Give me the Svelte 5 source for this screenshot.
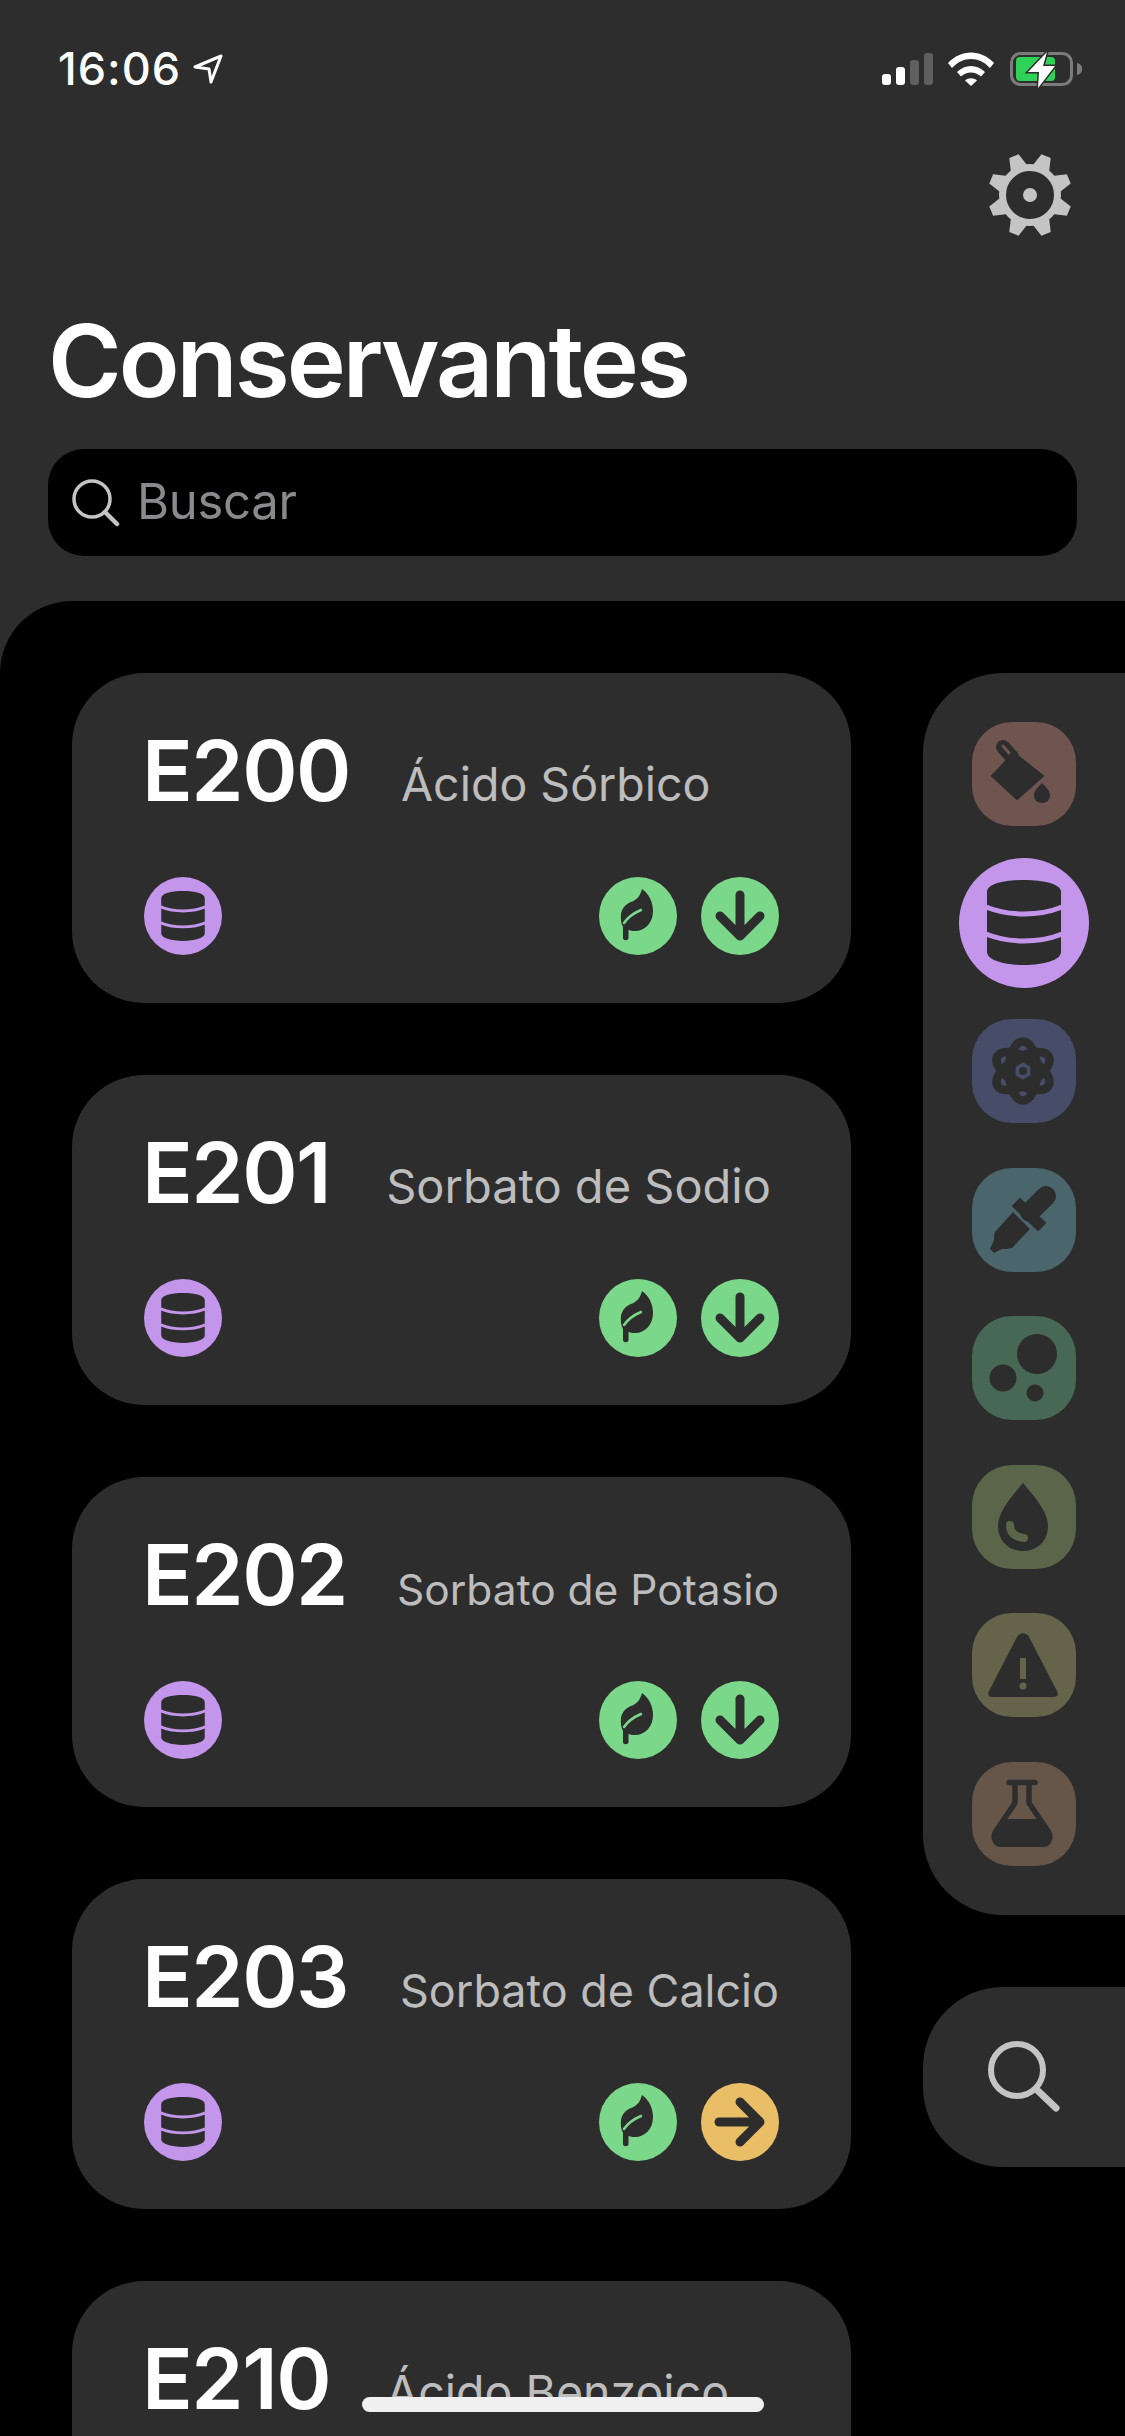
<script>
  const rows = [
    { code: 'E200', name: 'Ácido Sórbico', gap: 51, size: 46.5, end: 'down' },
    { code: 'E201', name: 'Sorbato de Sodio', gap: 56, size: 47, end: 'down' },
    { code: 'E202', name: 'Sorbato de Potasio', gap: 50, size: 42.5, end: 'down' },
    { code: 'E203', name: 'Sorbato de Calcio', gap: 52, size: 44.9, end: 'right' },
    { code: 'E210', name: 'Ácido Benzoico', gap: 56, size: 46.5, end: 'none' }
  ];
  const teeth = [0, 45, 90, 135, 180, 225, 270, 315];
</script>

{#snippet db(cls)}
  <svg viewBox="0 0 74 85" class={cls} aria-hidden="true">
    <path d="M0 12C0 4 17 0 37 0s37 4 37 12V72C74 80 57 85 37 85S0 80 0 72Z" fill="#2d2d2d" />
    <path d="M-1 27C11 32 24 34 37 34s26-2 38-7M-1 54C11 59 24 61 37 61s26-2 38-7" fill="none" stroke="#c396ec" stroke-width="5" />
  </svg>
{/snippet}

<div class="screen">
  <header class="head">
    <div class="status">
      <div class="time">
        <span>16:06</span>
        <svg viewBox="0 0 30 30" class="loc" aria-hidden="true">
          <path d="M28 2 2 13l14 2 2 13Z" fill="none" stroke="#fff" stroke-width="3" stroke-linejoin="round" />
        </svg>
      </div>
      <div class="sys">
        <div class="bars">
          <i class="b1"></i><i class="b2"></i><i class="b3"></i><i class="b4"></i>
        </div>
        <svg viewBox="0 0 46 34" class="wifi" aria-hidden="true">
          <path d="M0 11C13-3 33-3 46 11l-4 5C31 4 15 4 4 16Z" fill="#fff" />
          <path d="M9 20c8-8 20-8 28 0l-4 4.500c-6-5.500-14-5.500-20 0Z" fill="#fff" />
          <path d="M17 28.500c3.500-3 8.500-3 12 0L23 34Z" fill="#fff" />
        </svg>
        <svg viewBox="0 0 72 36" class="batt" aria-hidden="true">
          <rect x="1.500" y="1.500" width="60" height="31" rx="9" fill="none" stroke="#7c7c7c" stroke-width="3" />
          <rect x="6" y="5" width="39" height="24" rx="4" fill="#30d158" />
          <path d="M67 11c4 1 5 3 5 6s-1 5-5 6Z" fill="#7c7c7c" />
          <path d="M37 0 18 20h11l-1 16 17-22H33l4-14Z" fill="#fff" stroke="#2d2d2d" stroke-width="3" paint-order="stroke" />
        </svg>
      </div>
    </div>
    <div class="tools">
      <svg viewBox="-42 -42 84 84" class="gear" aria-hidden="true">
        {#each teeth as t}
          <path d="M-5-42 5-42 9-28-9-28Z" transform="rotate({t + 22.5})" fill="#c4c4c4" />
        {/each}
        <circle r="27.500" fill="none" stroke="#c4c4c4" stroke-width="7" />
        <circle r="7" fill="#c4c4c4" />
      </svg>
    </div>
    <h1>Conservantes</h1>
    <div class="search">
      <svg viewBox="0 0 48 48" class="s-ic" aria-hidden="true">
        <circle cx="20" cy="20" r="18" fill="none" stroke="#c4c4c4" stroke-width="3.500" />
        <path d="M33 33 45 45" stroke="#c4c4c4" stroke-width="4.500" stroke-linecap="round" />
      </svg>
      <span class="ph">Buscar</span>
    </div>
  </header>

  <main class="panel">
    <div class="list">
      {#each rows as r}
        <article class="card">
          <div class="top">
            <span class="code">{r.code}</span>
            <span class="name" style="margin-left: {r.gap}px; font-size: {r.size}px">{r.name}</span>
          </div>
          <div class="bottom">
            <span class="dot purple">{@render db('db')}</span>
            <span class="right">
              <span class="dot green">
                <svg viewBox="0 0 78 78" class="in" aria-hidden="true">
                  <path d="M43 12C50 17 54 25 54 34C54 46 46 54 36 54C33 54 31 53.500 29.500 53L29.500 61C29.500 64 24 64 24 61L24 50C22 46 21.500 42 22 37C23 31 27 27 32 25C38 23 41 19 43 12Z" fill="#2d2d2d" />
                  <path d="M25 46C29 40 35 36 42 33" fill="none" stroke="#7bd88a" stroke-width="2.500" stroke-linecap="round" />
                </svg>
              </span>
              {#if r.end === 'down'}
                <span class="dot green">
                  <svg viewBox="0 0 78 78" class="in" aria-hidden="true">
                    <path d="M39 18V59M19 39 39 59 59 39" fill="none" stroke="#2d2d2d" stroke-width="9" stroke-linecap="round" stroke-linejoin="round" />
                  </svg>
                </span>
              {:else if r.end === 'right'}
                <span class="dot amber">
                  <svg viewBox="0 0 78 78" class="in" aria-hidden="true">
                    <path d="M18 39H59M39 19 59 39 39 59" fill="none" stroke="#2d2d2d" stroke-width="9" stroke-linecap="round" stroke-linejoin="round" />
                  </svg>
                </span>
              {/if}
            </span>
          </div>
        </article>
      {/each}
    </div>

    <aside class="side">
      <nav class="cats">
        <span class="cat c1">
          <svg viewBox="0 0 104 104" aria-hidden="true">
            <path d="M38 35 42 31 71 54 45 77 20 54Z" fill="#2d2d2d" stroke="#2d2d2d" stroke-width="2" stroke-linejoin="round" />
            <path d="M31 25 40 35" stroke="#2d2d2d" stroke-width="14" stroke-linecap="round" />
            <path d="M31 24 37 31" stroke="#6f5450" stroke-width="3" stroke-linecap="round" />
            <path d="M70 61c4 4 8 8 8 12.500 0 4.500-3.500 7.500-8 7.500s-8-3-8-7.500c0-4.500 4-8.500 8-12.500Z" fill="#2d2d2d" />
          </svg>
        </span>
        <span class="cat active">{@render db('db big')}</span>
        <span class="cat c3">
          <svg viewBox="0 0 104 104" aria-hidden="true">
            <g fill="none" stroke="#2d2d2d" stroke-width="8.500">
              <ellipse cx="51" cy="52" rx="14" ry="29.500" />
              <ellipse cx="51" cy="52" rx="14" ry="29.500" transform="rotate(60 51 52)" />
              <ellipse cx="51" cy="52" rx="14" ry="29.500" transform="rotate(120 51 52)" />
            </g>
            <circle cx="51" cy="52" r="12" fill="#2d2d2d" />
            <path d="M51 43.500l7.400 4.250v8.500L51 60.500l-7.400-4.250v-8.500Z" fill="#474d68" />
            <circle cx="51" cy="52" r="4" fill="#2d2d2d" />
          </svg>
        </span>
        <span class="cat c4">
          <svg viewBox="0 0 104 104" aria-hidden="true">
            <path d="M74 28 58 44" stroke="#2d2d2d" stroke-width="20" stroke-linecap="round" />
            <path d="M41 38 48 31 73 55 66 62Z" fill="#2d2d2d" stroke="#2d2d2d" stroke-width="2" stroke-linejoin="round" />
            <path d="M41 44 58 61 40 80C36 81 33 81 30 81L22 85 18 81 22 72C22 69 22 66 23 64Z" fill="#2d2d2d" />
          </svg>
        </span>
        <span class="cat c5">
          <svg viewBox="0 0 104 104" aria-hidden="true">
            <circle cx="65" cy="38" r="20" fill="#2d2d2d" />
            <circle cx="31" cy="62" r="13.500" fill="#2d2d2d" />
            <circle cx="63" cy="77" r="8.500" fill="#2d2d2d" />
          </svg>
        </span>
        <span class="cat c6">
          <svg viewBox="0 0 104 104" aria-hidden="true">
            <path d="M51 18c10 12 25 28 25 43 0 15-11 25-25 25S26 76 26 61c0-15 15-31 25-43Z" fill="#2d2d2d" />
            <path d="M38 60c0 8 5 12 14 13" fill="none" stroke="#5a6549" stroke-width="8" stroke-linecap="round" />
          </svg>
        </span>
        <span class="cat c7">
          <svg viewBox="0 0 104 104" aria-hidden="true">
            <path d="M45 24c3-5 9-5 12 0L85 78c2 4 0 6-4 6H21c-4 0-6-2-4-6Z" fill="#2d2d2d" />
            <path d="M51 45V66" stroke="#65644a" stroke-width="6" />
            <circle cx="51" cy="73" r="3.500" fill="#65644a" />
          </svg>
        </span>
        <span class="cat c8">
          <svg viewBox="0 0 104 104" aria-hidden="true">
            <path d="M37 20.500H63M43 21V41L24 69c-4 6-1 13 6 13h40c7 0 10-7 6-13L57 41V21" fill="none" stroke="#2d2d2d" stroke-width="5.500" stroke-linecap="round" stroke-linejoin="round" />
            <path d="M35 57H65L78 74c3 5 0 11-6 11H28c-6 0-9-6-6-11Z" fill="#2d2d2d" />
          </svg>
        </span>
      </nav>
      <div class="finder">
        <svg viewBox="0 0 72 72" class="f-ic" aria-hidden="true">
          <circle cx="29" cy="29" r="26" fill="none" stroke="#c4c4c4" stroke-width="6" />
          <path d="M48 48 68 67" stroke="#c4c4c4" stroke-width="7" stroke-linecap="round" />
        </svg>
      </div>
    </aside>
  </main>
  <div class="home"></div>
</div>

<style>
  :global(body) {
    margin: 0;
    background: #000;
  }
  .screen {
    position: relative;
    width: 1125px;
    height: 2436px;
    overflow: hidden;
    background: #2d2d2d;
    font-family: Inter, "Liberation Sans", sans-serif;
    color: #fff;
  }
  .head {
    height: 601px;
    box-sizing: border-box;
    padding: 0 48px;
  }
  .status {
    height: 140px;
    margin: 0 -48px;
    padding: 47px 43px 0 58px;
    box-sizing: border-box;
    display: flex;
    justify-content: space-between;
    align-items: flex-start;
  }
  .time {
    display: flex;
    align-items: center;
    gap: 12px;
    font-size: 45px;
    line-height: 44px;
    font-weight: 500;
    letter-spacing: 1px;
  }
  .loc {
    width: 30px;
    height: 30px;
  }
  .sys {
    display: flex;
    align-items: flex-start;
    padding-top: 5px;
  }
  .bars {
    width: 51px;
    height: 33px;
    margin-right: 15px;
    display: flex;
    gap: 5px;
    align-items: flex-end;
  }
  .bars i {
    width: 9px;
    border-radius: 3px;
    background: #fff;
  }
  .b1 { height: 11px; }
  .b2 { height: 18px; }
  .bars .b3 { height: 25px; background: #5f5f5f; }
  .bars .b4 { height: 32px; background: #5f5f5f; }
  .wifi {
    width: 46px;
    height: 34px;
    margin-right: 16px;
  }
  .batt {
    width: 72px;
    height: 36px;
  }
  .tools {
    height: 96px;
    margin-right: 5px;
    display: flex;
    justify-content: flex-end;
  }
  .gear {
    width: 84px;
    height: 84px;
    margin-top: 13px;
  }
  h1 {
    margin: 67px 0 0;
    font-size: 100px;
    line-height: 116px;
    font-weight: 600;
    letter-spacing: -3px;
    height: 116px;
  }
  .search {
    margin-top: 30px;
    height: 107px;
    border-radius: 36px;
    background: #000;
    display: flex;
    align-items: center;
    padding-left: 24px;
    gap: 17px;
    font-size: 49px;
    letter-spacing: -0.3px;
    color: #8a8a8c;
  }
  .ph {
    padding-bottom: 3px;
  }
  .s-ic {
    width: 48px;
    height: 48px;
  }
  .panel {
    height: 1835px;
    background: #000;
    border-radius: 72px 0 0 0;
    display: flex;
    align-items: flex-start;
    padding: 72px 0 0 72px;
    box-sizing: border-box;
  }
  .list {
    width: 779px;
    display: flex;
    flex-direction: column;
    gap: 72px;
    flex: none;
  }
  .card {
    height: 330px;
    border-radius: 72px;
    background: #2d2d2d;
    padding: 0 72px;
    box-sizing: border-box;
    flex: none;
  }
  .top {
    height: 204px;
    padding-top: 50px;
    box-sizing: border-box;
    display: flex;
    align-items: baseline;
    white-space: nowrap;
  }
  .code {
    font-size: 84px;
    line-height: 96px;
    font-weight: 600;
    letter-spacing: -1.5px;
    margin-left: -2px;
  }
  .name {
    color: #bdbdbd;
  }
  .bottom {
    display: flex;
    justify-content: space-between;
  }
  .right {
    display: flex;
    gap: 24px;
  }
  .dot {
    width: 78px;
    height: 78px;
    border-radius: 50%;
    display: flex;
    align-items: center;
    justify-content: center;
  }
  .purple { background: #c396ec; }
  .green { background: #7bd88a; }
  .amber { background: #e9be66; }
  .in {
    width: 78px;
    height: 78px;
  }
  .dot :global(.db) {
    width: 44px;
    height: 50px;
  }
  .side {
    margin-left: 72px;
    flex: 1;
    display: flex;
    flex-direction: column;
    gap: 72px;
  }
  .cats {
    height: 1242px;
    box-sizing: border-box;
    background: #2d2d2d;
    border-radius: 80px 0 0 80px;
    padding-top: 49px;
    display: flex;
    flex-direction: column;
    align-items: center;
  }
  .cat {
    flex: none;
    width: 104px;
    height: 104px;
    margin-bottom: 44.500px;
    border-radius: 40px;
    display: block;
  }
  .cat svg {
    width: 104px;
    height: 104px;
    display: block;
  }
  .cat.active {
    width: 130px;
    height: 130px;
    margin: -13px 0 31.500px;
    border-radius: 50%;
    background: #c396ec;
    display: flex;
    align-items: center;
    justify-content: center;
  }
  .cat.active :global(.db.big) {
    width: 74px;
    height: 85px;
  }
  .c1 { background: #6f5450; }
  .c3 { background: #474d68; }
  .c4 { background: #4a656c; }
  .c5 { background: #486856; }
  .c6 { background: #5a6549; }
  .c7 { background: #65644a; }
  .c8 { background: #66564a; }
  .finder {
    height: 180px;
    background: #2d2d2d;
    border-radius: 80px 0 0 80px;
    display: flex;
    align-items: center;
    padding-left: 65px;
  }
  .f-ic {
    width: 72px;
    height: 72px;
  }
  .home {
    position: absolute;
    left: 362px;
    top: 2397px;
    width: 402px;
    height: 15px;
    border-radius: 8px;
    background: #f0f0f0;
  }
</style>
